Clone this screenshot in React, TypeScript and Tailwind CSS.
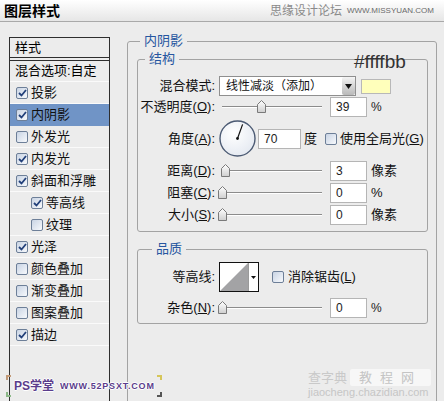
import React from "react";

const FONT = "font-['Liberation_Sans','Noto_Sans_CJK_SC',sans-serif]";

function CheckBox({ checked }: { checked: boolean }) {
  return (
    <span className="flex h-[12px] w-[12px] shrink-0 items-center justify-center rounded-[2px] border border-[#6d7f98] bg-gradient-to-br from-[#c9d4e4] to-[#f7f9fc]">
      {checked && (
        <svg width="9" height="8" viewBox="0 0 9 8">
          <path d="M1 4 L3.5 6.5 L8 1" fill="none" stroke="#22407a" strokeWidth="1.8" />
        </svg>
      )}
    </span>
  );
}

function Thumb() {
  return (
    <svg width="9" height="13" viewBox="0 0 9 13">
      <defs>
        <linearGradient id="th" x1="0" y1="0" x2="0" y2="1">
          <stop offset="0" stopColor="#ffffff" />
          <stop offset="1" stopColor="#cfcfcf" />
        </linearGradient>
      </defs>
      <path d="M0.5 12.5 V4.5 L4.5 0.5 L8.5 4.5 V12.5 Z" fill="url(#th)" stroke="#7a7a7a" />
    </svg>
  );
}

function Slider({ value }: { value: number }) {
  return (
    <div className="relative flex h-[20px] w-[108px] items-center">
      <div className="ml-[3px] h-[2px] w-[100px] border-t border-[#8c8c8c] bg-white" />
      <div className="absolute top-[3px]" style={{ left: 3 + value - 4 }}>
        <Thumb />
      </div>
    </div>
  );
}

function NumBox({ value, w = "w-[37px]" }: { value: string; w?: string }) {
  return (
    <div className={`flex h-[20px] ${w} items-center border border-[#b5b5b5] bg-white pl-[5px] text-[12px] text-[#222]`}>
      {value}
    </div>
  );
}

function Label({ children }: { children: React.ReactNode }) {
  return (
    <div className="w-[78px] shrink-0 pr-[1px] text-right text-[13px] leading-[20px] text-[#111]">
      {children}
    </div>
  );
}

function Dial() {
  return (
    <svg width="37" height="37" viewBox="0 0 37 37">
      <defs>
        <radialGradient id="dl" cx="0.4" cy="0.35" r="0.7">
          <stop offset="0" stopColor="#ffffff" />
          <stop offset="1" stopColor="#e4e9f1" />
        </radialGradient>
      </defs>
      <circle cx="18.5" cy="18.5" r="17.5" fill="url(#dl)" stroke="#4b5a73" strokeWidth="1.4" />
      <line x1="18.5" y1="18.5" x2="23.6" y2="4.4" stroke="#111" strokeWidth="1.2" />
      <circle cx="18.5" cy="18.5" r="1.4" fill="#111" />
    </svg>
  );
}

const styles = [
  { name: "投影", checked: true },
  { name: "内阴影", checked: true, active: true },
  { name: "外发光", checked: false },
  { name: "内发光", checked: true },
  { name: "斜面和浮雕", checked: true },
  { name: "等高线", checked: true, sub: true },
  { name: "纹理", checked: false, sub: true },
  { name: "光泽", checked: true },
  { name: "颜色叠加", checked: false },
  { name: "渐变叠加", checked: false },
  { name: "图案叠加", checked: false },
  { name: "描边", checked: true },
];

export default function App() {
  return (
    <div className={`relative h-[401px] w-[444px] overflow-hidden bg-[#ececec] ${FONT}`}>
      {/* title bar */}
      <div className="flex h-[22px] items-center border-b border-[#a9a9a9] bg-gradient-to-b from-white to-[#e6e6e6] pl-[4px]">
        <span className="text-[14px] font-bold leading-none text-black">图层样式</span>
        <span className="ml-auto text-[12px] leading-none text-[#8a8a8a]">思缘设计论坛</span>
        <span className="ml-[5px] mr-[10px] text-[8px] leading-none text-[#6a6a6a]">WWW.MISSYUAN.COM</span>
      </div>

      <div className="flex">
        {/* left style list */}
        <div className="ml-[9px] mt-[15px] h-[380px] w-[101px] shrink-0 border border-[#2e2e2e]">
          <div className="flex h-[20px] items-center border-b border-[#2e2e2e] pl-[5px] text-[13px]">样式</div>
          <div className="mt-[2px] flex h-[22px] items-center border-t border-b border-t-[#2e2e2e] border-b-[#fafafa] pl-[5px] text-[13px]">
            混合选项:自定
          </div>
          {styles.map((s) => (
            <div
              key={s.name}
              className={`flex h-[22px] items-center gap-[3px] border-b text-[13px] ${
                s.active ? "border-[#7094c6] bg-[#7094c6]" : "border-[#fafafa]"
              } ${s.sub ? "pl-[21px]" : "pl-[6px]"}`}
            >
              <CheckBox checked={s.checked} />
              <span className="text-[#111]">{s.name}</span>
            </div>
          ))}
        </div>

        {/* right settings */}
        <fieldset className="ml-[17px] mt-[12px] h-[400px] w-[310px] rounded-[3px] border border-[#a3a3a3] pl-[9px] pr-[8px]">
          <legend className="ml-[3px] px-[4px] text-[13px] leading-[14px] text-[#2656a0]">内阴影</legend>

          <fieldset className="mt-[4px] rounded-[3px] border border-[#a3a3a3] pb-[6px]">
            <legend className="ml-[7px] px-[4px] text-[13px] leading-[14px] text-[#2656a0]">结构</legend>

            <div className="mt-[10px] flex h-[20px] items-center">
              <Label>混合模式:</Label>
              <div className="ml-[3px] flex h-[20px] w-[137px] border border-[#8f8f8f] bg-white">
                <span className="flex-1 pl-[6px] text-[12px] leading-[18px] text-[#111]">线性减淡（添加）</span>
                <span className="flex w-[13px] items-center justify-center rounded-[2px] bg-gradient-to-b from-[#f4f4f4] to-[#b9b9b9]">
                  <svg width="7" height="5" viewBox="0 0 7 5">
                    <path d="M0 0 H7 L3.5 5 Z" fill="#111" />
                  </svg>
                </span>
              </div>
              <span className="ml-[5px] h-[15px] w-[30px] border border-[#b8b8b8] bg-[#ffffbb]" />
            </div>

            <div className="mt-[1px] flex h-[20px] items-center">
              <Label>
                不透明度(<u>O</u>):
              </Label>
              <div className="ml-[3px]">
                <Slider value={39} />
              </div>
              <div className="ml-[3px]">
                <NumBox value="39" />
              </div>
              <span className="ml-[4px] text-[12px] text-[#222]">%</span>
            </div>

            <div className="mt-[3px] flex h-[37px] items-center">
              <Label>
                角度(<u>A</u>):
              </Label>
              <div className="ml-[3px]">
                <Dial />
              </div>
              <div className="ml-[2px]">
                <NumBox value="70" w="w-[43px]" />
              </div>
              <span className="ml-[3px] text-[13px] text-[#111]">度</span>
              <span className="ml-[8px]">
                <CheckBox checked={false} />
              </span>
              <span className="ml-[3px] text-[13px] text-[#111]">
                使用全局光(<u>G</u>)
              </span>
            </div>

            {[
              { l: "距离", k: "D", v: 3, u: "像素" },
              { l: "阻塞", k: "C", v: 0, u: "%" },
              { l: "大小", k: "S", v: 0, u: "像素" },
            ].map((r, i) => (
              <div key={r.l} className={`${i === 0 ? "mt-[4px]" : "mt-[2px]"} flex h-[20px] items-center`}>
                <Label>
                  {r.l}(<u>{r.k}</u>):
                </Label>
                <div className="ml-[3px]">
                  <Slider value={r.v} />
                </div>
                <div className="ml-[3px]">
                  <NumBox value={String(r.v)} />
                </div>
                <span className="ml-[4px] text-[13px] text-[#111]">{r.u}</span>
              </div>
            ))}
          </fieldset>

          <fieldset className="mt-[10px] rounded-[3px] border border-[#a3a3a3] pb-[5px]">
            <legend className="ml-[14px] px-[4px] text-[13px] leading-[14px] text-[#2656a0]">品质</legend>

            <div className="mt-[6px] flex h-[30px] items-center">
              <Label>等高线:</Label>
              <div className="ml-[3px] flex h-[30px] w-[40px] border border-[#111] bg-white">
                <svg width="28" height="28" viewBox="0 0 28 28" className="shrink-0">
                  <polygon points="0,28 28,0 28,28" fill="#a3a3a5" />
                </svg>
                <span className="flex flex-1 items-center justify-center border-l border-[#9a9a9a]">
                  <svg width="5" height="3" viewBox="0 0 5 3">
                    <path d="M0 0 H5 L2.5 3 Z" fill="#111" />
                  </svg>
                </span>
              </div>
              <span className="ml-[13px]">
                <CheckBox checked={false} />
              </span>
              <span className="ml-[4px] text-[13px] text-[#111]">
                消除锯齿(<u>L</u>)
              </span>
            </div>

            <div className="mt-[6px] flex h-[20px] items-center">
              <Label>
                杂色(<u>N</u>):
              </Label>
              <div className="ml-[3px]">
                <Slider value={0} />
              </div>
              <div className="ml-[3px]">
                <NumBox value="0" />
              </div>
              <span className="ml-[4px] text-[12px] text-[#222]">%</span>
            </div>
          </fieldset>
        </fieldset>
      </div>

      {/* colour code note over the swatch */}
      <span className="absolute left-[354px] top-[52px] text-[19px] leading-[20px] text-[#333]">#ffffbb</span>

      {/* watermark bottom-left */}
      <div className="absolute left-[6px] top-[374px] flex h-[24px] items-center">
        <div className="flex h-[22px] flex-col justify-between">
          <span className="h-[5px] w-[5px] border-l-2 border-t-2 border-[#c29a78]" />
          <span className="h-[5px] w-[5px] border-b-2 border-l-2 border-[#8cb888]" />
        </div>
        <span className="ml-[3px] text-[12px] font-bold leading-none text-[#5b3d8c] [text-shadow:1px_0_#fff,-1px_0_#fff,0_1px_#fff,0_-1px_#fff]">
          PS学堂
        </span>
        <span className="ml-[6px] text-[9px] font-bold leading-none tracking-[0.8px] text-[#5b3d8c] [text-shadow:1px_0_#fff,-1px_0_#fff,0_1px_#fff,0_-1px_#fff]">
          WWW.52PSXT.COM
        </span>
        <div className="ml-[2px] flex h-[22px] flex-col justify-between">
          <span className="h-[5px] w-[5px] border-r-2 border-t-2 border-[#d6c65a]" />
          <span className="h-[5px] w-[5px] border-b-2 border-r-2 border-[#555]" />
        </div>
      </div>

      {/* watermark bottom-right */}
      <div className="absolute left-[308px] top-[369px] flex flex-col">
        <div className="flex items-center">
          <span className="text-[13px] leading-[17px] text-[#c9c9c9]">查字典</span>
          <span className="ml-[3px] rounded-[2px] bg-[#f7f7f7] px-[9px] text-[13px] leading-[17px] tracking-[8px] text-[#c4c4c4]">
            教程网
          </span>
        </div>
        <span className="text-[11px] leading-[12px] text-[#c6c6c6]">jiaocheng.chazidian.com</span>
      </div>
    </div>
  );
}
